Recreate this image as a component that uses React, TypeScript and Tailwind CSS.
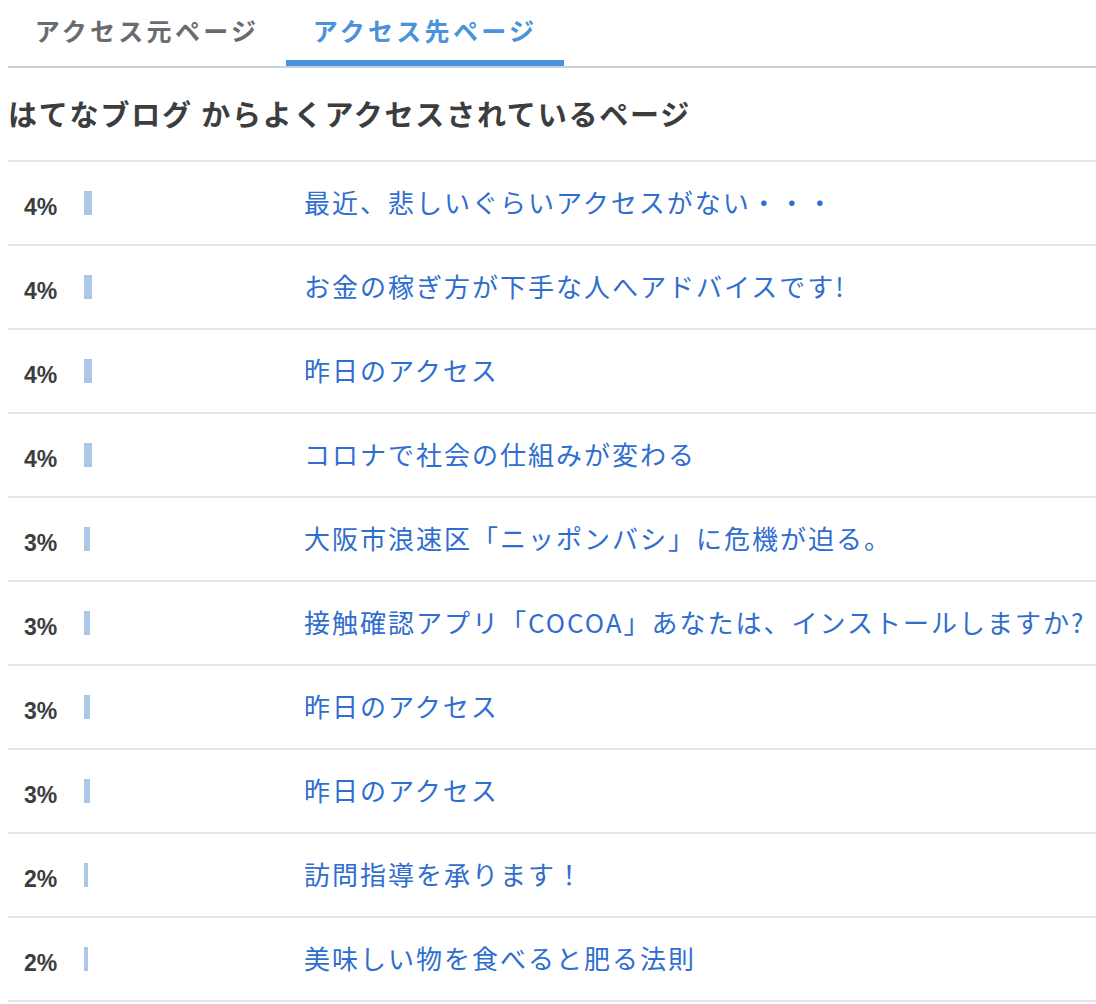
import React from "react";

const rows = [
  { pct: 4, title: "最近、悲しいぐらいアクセスがない・・・" },
  { pct: 4, title: "お金の稼ぎ方が下手な人へアドバイスです!" },
  { pct: 4, title: "昨日のアクセス" },
  { pct: 4, title: "コロナで社会の仕組みが変わる" },
  { pct: 3, title: "大阪市浪速区「ニッポンバシ」に危機が迫る。" },
  { pct: 3, title: "接触確認アプリ「COCOA」あなたは、インストールしますか?" },
  { pct: 3, title: "昨日のアクセス" },
  { pct: 3, title: "昨日のアクセス" },
  { pct: 2, title: "訪問指導を承ります！" },
  { pct: 2, title: "美味しい物を食べると肥る法則" },
];

export default function App() {
  return (
    <div
      className="w-[1096px] h-[1004px] bg-white pl-2 overflow-hidden"
      style={{ fontFamily: '"Noto Sans CJK JP", "Noto Sans", sans-serif' }}
    >
      <div className="flex border-b-2 border-[#c9d1d8] h-[68px]">
        <div className="w-[278px] flex items-center justify-center text-[25px] font-bold tracking-[3.3px] text-[#686c70] pb-1">
          アクセス元ページ
        </div>
        <div className="w-[278px] flex items-center justify-center text-[25px] font-bold tracking-[3.3px] text-[#4a92db] border-b-[6px] border-[#4a92db] pt-[2px]">
          アクセス先ページ
        </div>
      </div>
      <div className="h-[94px] flex items-center border-b-2 border-[#e1e5e9] text-[29px] font-bold tracking-[1.8px] text-[#3c3d3e]">
        はてなブログ からよくアクセスされているページ
      </div>
      {rows.map((r, i) => (
        <div key={i} className="h-[84px] flex items-center border-b-2 border-[#e1e5e9] pl-4">
          <div
            className="w-[60px] text-[23px] font-bold text-[#3c3d3e] pt-2"
            style={{ fontFamily: '"Liberation Sans", Arial, sans-serif' }}
          >
            {r.pct}%
          </div>
          <div className="w-[220px] flex">
            <div className="h-[24px] bg-[#adc8e7]" style={{ width: r.pct * 2 }} />
          </div>
          <div className="text-[26px] tracking-[2px] text-[#2f6ecf] whitespace-nowrap -mt-1">{r.title}</div>
        </div>
      ))}
    </div>
  );
}
